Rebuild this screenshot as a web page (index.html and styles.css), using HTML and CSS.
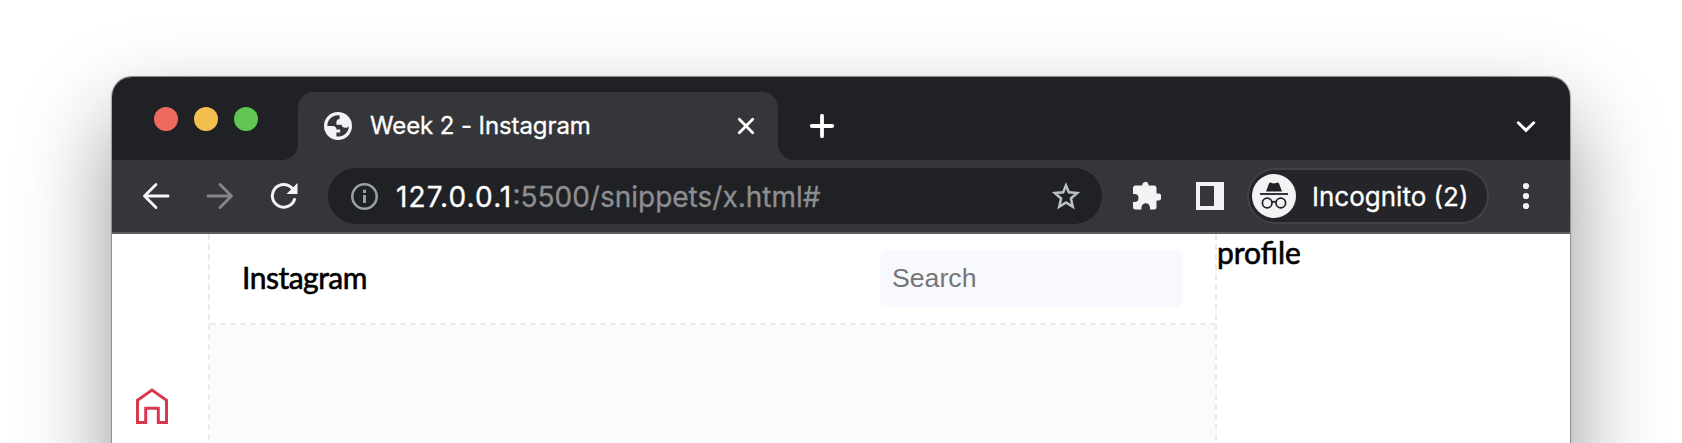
FILE: index.html
```html
<!DOCTYPE html>
<html lang="en">
<head>
<meta charset="utf-8">
<title>Week 2 - Instagram</title>
<link rel="stylesheet" href="styles.css">
</head>
<body>
<div class="window">
  <div class="tabstrip">
    <div class="lights"><i class="red"></i><i class="yellow"></i><i class="green"></i></div>
    <div class="tab">
      <svg class="globe" width="28" height="28" viewBox="0 0 28 28"><circle cx="14" cy="14" r="14" fill="#f1f3f4"/><path d="M15.600 3.400C12 2.800 8 4.300 5.600 7.200C4 9.200 3.300 11.500 3.400 14H8.800C11.200 14 12.400 15.400 12.500 17.600H16.200V20.600H12.400V24.400C17 25.300 21.500 23 23.600 19.100C24.500 17.400 24.800 15.800 24.700 14.200C23.900 15.200 22.700 15.700 21.300 15.700C19.300 15.700 17.900 14.500 17.500 12.700H12.400V10.500C12.400 8.300 13.500 7.200 15.600 7.100Z" fill="#35363a"/></svg>
      <span class="tab-title">Week 2 - Instagram</span>
      <svg class="close" width="18" height="18" viewBox="0 0 18 18"><path d="M2.300 2.300 15.700 15.700M15.700 2.300 2.300 15.700" stroke="#fff" stroke-width="2.800" stroke-linecap="round"/></svg>
    </div>
    <svg class="plus" width="24" height="24" viewBox="0 0 24 24"><path d="M12 1.800V22.200M1.800 12H22.200" stroke="#fff" stroke-width="3.800" stroke-linecap="round"/></svg>
    <svg class="chevron" width="20" height="14" viewBox="0 0 20 14"><path d="M2.300 2.800 10 10.300 17.700 2.800" fill="none" stroke="#fff" stroke-width="3" stroke-linecap="round"/></svg>
  </div>
  <div class="toolbar">
    <svg class="back" width="28" height="28" viewBox="0 0 28 28"><path d="M26 14H3M14 2.500 2.500 14 14 25.500" fill="none" stroke="#f5f6f7" stroke-width="2.900" stroke-linecap="round" stroke-linejoin="round"/></svg>
    <svg class="forward" width="28" height="28" viewBox="0 0 28 28"><path d="M2 14H25M14 2.500 25.500 14 14 25.500" fill="none" stroke="#858689" stroke-width="2.900" stroke-linecap="round" stroke-linejoin="round"/></svg>
    <svg class="reload" width="30" height="30" viewBox="0 0 30 30"><path d="M22.500 7.500A11.400 11.400 0 1 0 24.500 18.500" fill="none" stroke="#f1f3f4" stroke-width="3" stroke-linecap="round"/><path d="M27.500 2V13H16.500Z" fill="#f1f3f4"/></svg>
    <div class="address">
      <svg width="28" height="28" viewBox="0 0 28 28"><circle cx="14.500" cy="14.500" r="12.200" fill="none" stroke="#9aa0a6" stroke-width="2.500"/><path d="M14.500 7.800V11M14.500 13V21" stroke="#9aa0a6" stroke-width="3"/></svg>
      <span class="url"><span class="host">127.0.0.1</span>:5500/snippets/x.html#</span>
      <svg class="star" width="30" height="30" viewBox="0 0 30 30"><path d="M15 4.400 17.800 11.300 26.200 12 19.900 17.500 21.800 25.800 15 21.500 8.200 25.800 10.100 17.500 3.800 12 12.200 11.300Z" fill="none" stroke="#bdc1c6" stroke-width="2.500"/></svg>
    </div>
    <svg class="puzzle" width="30" height="30" viewBox="0 0 30 30"><path d="M4 5H9.800A3.100 3.100 0 0 1 16 4V5H21.500A2.500 2.500 0 0 1 24 7.500V13H25.500A3.400 3.400 0 0 1 25.500 20H24V26.500A2.500 2.500 0 0 1 21.500 29H17.500V27A4 4 0 0 0 9 27V29H3A2.500 2.500 0 0 1 .5 26.500V21.500H2A4 4 0 0 0 2 13.500H.5V7.500A2.500 2.500 0 0 1 3 5Z" transform="translate(1.500 -.5)" fill="#f1f3f4"/></svg>
    <svg class="panel" width="28" height="28" viewBox="0 0 28 28"><path d="M0 0H28V28H0ZM4 4V24H18V4Z" fill="#f1f3f4" fill-rule="evenodd"/></svg>
    <div class="incognito">
      <svg width="44" height="44" viewBox="0 0 44 44"><circle cx="22" cy="22" r="22" fill="#f1f3f4"/><path d="M14 17.500 17 9.500Q17.500 8.300 19 8.700L22 9.500 25 8.700Q26.500 8.300 27 9.500L30 17.500Z" fill="#202124"/><path d="M8 20H36" stroke="#202124" stroke-width="1.800"/><g fill="none" stroke="#202124" stroke-width="1.700"><circle cx="15.200" cy="29" r="4.800"/><circle cx="28.800" cy="29" r="4.800"/><path d="M20 28.500Q22 26.800 24 28.500"/></g></svg>
      <span>Incognito (2)</span>
    </div>
    <svg class="menu" width="8" height="28" viewBox="0 0 8 28"><g fill="#f1f3f4"><circle cx="4" cy="4" r="3.100"/><circle cx="4" cy="14" r="3.100"/><circle cx="4" cy="24" r="3.100"/></g></svg>
  </div>
  <div class="page">
    <nav class="side">
      <svg width="32" height="36" viewBox="0 0 32 36"><path d="M1.500 12.200 16 2 30.500 12.200V34.500H22.300V20.300H9.700V34.500H1.500Z" fill="none" stroke="#d73a50" stroke-width="3"/></svg>
    </nav>
    <main class="main">
      <header class="header">
        <span class="brand">Instagram</span>
        <input class="search" type="text" placeholder="Search">
      </header>
      <div class="feed"></div>
    </main>
    <aside class="profile">profile</aside>
  </div>
</div>
</body>
</html>
```
FILE: styles.css
```css
* { box-sizing: border-box; }
html, body { height: 443px; overflow: hidden; }
body { margin: 0; padding: 77px 112px 0; background: #fff; font-family: Inter, "Liberation Sans", sans-serif; }
svg { display: block; flex: none; }
.window { position: relative; width: 1458px; height: 366px; }
/* The window's shadow continues below the fold. */
.window::before {
  content: ""; position: absolute; z-index: -1; top: 0; left: 0; width: 100%; height: 1000px; border-radius: 20px 20px 0 0;
  box-shadow: 0 -1px 0 rgba(130,130,130,.75), 0 0 1px 1px rgba(0,0,0,.3), 0 42px 92px rgba(0,0,0,.42);
}
.tabstrip { display: flex; height: 83px; background: #202124; border-radius: 20px 20px 0 0; }
.lights { display: flex; gap: 16px; width: 170px; padding: 30px 0 0 42px; }
.lights i { width: 24px; height: 24px; border-radius: 50%; }
.red { background: #ed6a5e; }
.yellow { background: #f5bf4f; }
.green { background: #61c554; }
.tab {
  display: flex; align-items: center; width: 512px; height: 68px; margin-top: 15px; padding: 0 39px 0 42px;
  background:
    radial-gradient(circle at 0 0, #202124 15.500px, #35363a 16.500px) 0 100% / 16px 16px no-repeat,
    radial-gradient(circle at 100% 0, #202124 15.500px, #35363a 16.500px) 100% 100% / 16px 16px no-repeat,
    radial-gradient(circle at 100% 100%, #35363a 15.500px, transparent 16.500px) 16px 0 / 16px 16px no-repeat,
    radial-gradient(circle at 0 100%, #35363a 15.500px, transparent 16.500px) 480px 0 / 16px 16px no-repeat,
    linear-gradient(#35363a, #35363a) 32px 0 / 448px 16px no-repeat,
    linear-gradient(#35363a, #35363a) 16px 16px / 480px 52px no-repeat;
}
.tab-title { margin-left: 18px; color: #fff; font-size: 24px; line-height: 30px; letter-spacing: -.1px; white-space: nowrap; -webkit-text-stroke: .3px; }
.close { margin-left: auto; }
.plus { margin: 37px 0 0 16px; }
.chevron { margin: 43px 34px 0 auto; }
.toolbar { display: flex; align-items: center; height: 74px; padding-left: 30px; background: #35363a; border-bottom: 2px solid #5d5d61; }
.forward { margin-left: 36px; }
.reload { margin-left: 36px; }
.address { display: flex; align-items: center; width: 774px; height: 56px; margin-left: 28px; padding: 0 21px 0 22px; border-radius: 28px; background: #202124; }
.url { margin-left: 18px; padding-top: 2px; color: #8d8e91; font-size: 28px; line-height: 34px; white-space: nowrap; -webkit-text-stroke: .3px; }
.host { color: #fff; letter-spacing: 1.100px; }
.star { margin-left: auto; }
.puzzle { margin-left: 29px; }
.panel { margin-left: 35px; }
.incognito {
  display: flex; align-items: center; width: 242px; height: 56px; margin-left: 23px; padding-left: 3px;
  border: 2px solid #414146; border-radius: 28px; background: #252428; color: #fff;
}
.incognito span { margin-left: 16px; padding-top: 2px; font-size: 26px; line-height: 34px; white-space: nowrap; -webkit-text-stroke: .3px; }
.menu { margin-left: 33px; }
.page { display: flex; height: 209px; background: #fff; font-family: Lato, "Open Sans", sans-serif; color: #000; }
.side { width: 96px; padding: 154px 0 0 24px; }
.main {
  width: 1009px; padding: 0 2px;
  background:
    repeating-linear-gradient(#ebebec 0 6px, transparent 6px 10px) 0 0 / 2px 100% no-repeat,
    repeating-linear-gradient(#ebebec 0 6px, transparent 6px 10px) 100% 0 / 2px 100% no-repeat;
}
.header {
  display: flex; align-items: center; justify-content: space-between; height: 91px; padding: 0 32px 2px;
  background: repeating-linear-gradient(90deg, #ebebec 0 6px, transparent 6px 10px) 0 100% / 100% 2px no-repeat;
}
.brand { padding-bottom: 3px; font-size: 30px; line-height: 38px; letter-spacing: -.500px; -webkit-text-stroke: .6px; }
.search { width: 303px; height: 57px; padding: 0 12px; border: 0; border-radius: 6px; background: #f8f9fe; font: 26.667px "Liberation Sans", sans-serif; }
.search::placeholder { color: #757575; opacity: 1; }
.feed { height: 118px; background: #fafbfd; }
.profile { margin-top: -1px; font-size: 30px; line-height: 38px; -webkit-text-stroke: .6px; }
```
